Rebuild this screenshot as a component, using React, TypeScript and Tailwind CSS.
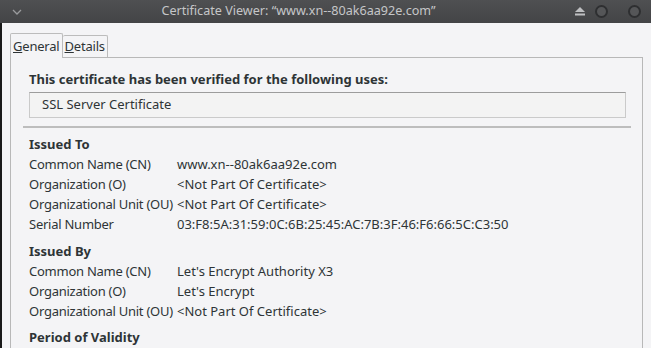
const font = { fontFamily: '"Noto Sans", "Open Sans", sans-serif' };

function Row({ label, value }: { label: string; value: string }) {
  return (
    <div className="flex h-5 items-center">
      <span className="w-[148px] shrink-0 whitespace-nowrap tracking-[-0.25px]">{label}</span>
      <span className="whitespace-nowrap">{value}</span>
    </div>
  );
}

function Section({ title, rows }: { title: string; rows: [string, string][] }) {
  return (
    <div>
      <div className="flex h-5 items-center font-bold">{title}</div>
      {rows.map(([l, v]) => (
        <Row key={l} label={l} value={v} />
      ))}
    </div>
  );
}

export default function App() {
  return (
    <div className="flex h-[348px] w-[651px] flex-col overflow-hidden bg-[#f4f4f6] text-[13px] text-[#2e3436]" style={font}>
      {/* title bar */}
      <div className="relative flex h-[23px] shrink-0 items-center bg-gradient-to-b from-[#4f5052] to-[#434446] pl-[12px] pr-[10px]">
        <svg width="10" height="6" viewBox="0 0 10 6" className="text-[#9a9b9d]">
          <path d="M1 1 L5 5 L9 1" stroke="currentColor" strokeWidth="1.3" fill="none" />
        </svg>
        <div className="flex-1 text-center text-[12.6px] text-[#c5c6c8]">
          Certificate Viewer: “www.xn--80ak6aa92e.com”
        </div>
        <div className="flex items-center">
          <svg width="10" height="9" viewBox="0 0 10 9" className="mr-[10px] text-[#bfc0c2]">
            <path d="M5 0 L10 5 H0 Z" fill="currentColor" />
            <rect x="0" y="6.5" width="10" height="2" fill="currentColor" />
          </svg>
          <span className="h-[13px] w-[13px] rounded-full border-2 border-[#2e2f31] bg-[#555658]" />
          <span className="ml-[20px] h-[13px] w-[13px] rounded-full border-2 border-[#2e2f31] bg-[#555658]" />
        </div>
      </div>

      <div className="flex flex-1 border-l-2 border-[#1a1a1a]">
        <div className="flex flex-1 flex-col pl-[8px] pr-[8px] pt-[10px]">
          {/* tabs */}
          <div className="flex items-end">
            <div className="relative -mb-px h-[25px] rounded-t-[2px] border border-b-0 border-[#bcbcbc] bg-[#f4f4f6] px-[2px] pt-[3px] tracking-[-0.2px]">
              <span className="underline">G</span>eneral
            </div>
            <div className="h-[22px] rounded-t-[2px] border border-l-0 border-b-0 border-[#bcbcbc] px-[2px] pt-[1px] tracking-[-0.2px]">
              <span className="underline">D</span>etails
            </div>
          </div>
          {/* panel */}
          <div className="flex-1 border border-b-0 border-[#b8b8b8] pl-[18px] pr-[16px] pt-[12px]">
            <div className="flex h-[19px] items-center font-bold">This certificate has been verified for the following uses:</div>
            <div className="mt-[3px] flex h-[26px] items-center border border-[#cacaca] border-t-[#9c9c9c] bg-[#f3f3f3] px-[12px]">
              SSL Server Certificate
            </div>
            <div className="-ml-[6px] -mr-[5px] mt-[8px] h-[2px] bg-[#bdbdbd]" />
            <div className="mt-[7px]">
              <Section
                title="Issued To"
                rows={[
                  ["Common Name (CN)", "www.xn--80ak6aa92e.com"],
                  ["Organization (O)", "<Not Part Of Certificate>"],
                  ["Organizational Unit (OU)", "<Not Part Of Certificate>"],
                  ["Serial Number", "03:F8:5A:31:59:0C:6B:25:45:AC:7B:3F:46:F6:66:5C:C3:50"],
                ]}
              />
              <div className="mt-[7px]">
                <Section
                  title="Issued By"
                  rows={[
                    ["Common Name (CN)", "Let's Encrypt Authority X3"],
                    ["Organization (O)", "Let's Encrypt"],
                    ["Organizational Unit (OU)", "<Not Part Of Certificate>"],
                  ]}
                />
              </div>
              <div className="mt-[6px] flex h-5 items-center font-bold">Period of Validity</div>
            </div>
          </div>
        </div>
      </div>
    </div>
  );
}
